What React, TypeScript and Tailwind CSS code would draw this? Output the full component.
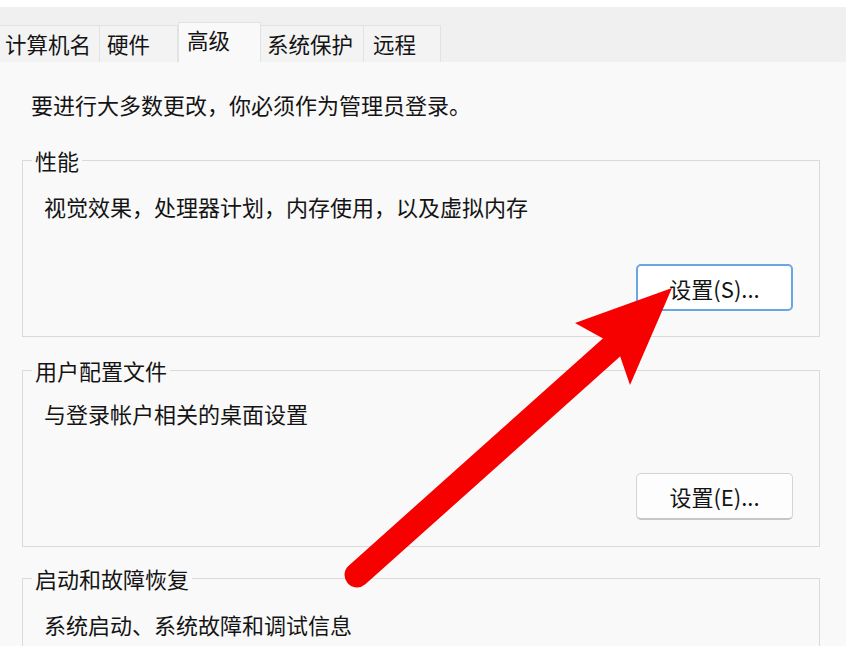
import React from "react";

const font = { fontFamily: '"Noto Sans CJK SC", "Noto Sans", sans-serif' };

function Tab({ label, className }: { label: string; className: string }) {
  return (
    <div className={"flex items-center h-[37px] bg-[#f3f3f3] border-t border-r border-[#e2e2e2] text-[21.5px] leading-[30px] text-[#141414] " + className}>
      {label}
    </div>
  );
}

export default function App() {
  return (
    <div className="relative w-[846px] h-[646px] overflow-hidden bg-[#f9f9f9] text-[#141414]" style={font}>
      <div className="h-[7px] bg-white" />
      <div className="h-[55px] bg-[#f0f0f0] flex items-end">
        <Tab label="计算机名" className="w-[100px] pl-[5px]" />
        <Tab label="硬件" className="w-[78px] pl-[7px]" />
        <div className="h-[40px] w-[83px] bg-[#f9f9f9] border-t border-x border-[#e2e2e2] pl-[8px] pt-[2px] text-[21.5px] leading-[30px]">
          高级
        </div>
        <Tab label="系统保护" className="w-[103px] pl-[6px]" />
        <Tab label="远程" className="w-[77px] pl-[9px]" />
      </div>

      <div className="pt-[27px] pl-[31px] text-[22px] leading-[30px]">
        要进行大多数更改，你必须作为管理员登录。
      </div>

      <fieldset className="mt-[29px] ml-[22px] w-[798px] border border-[#dadada] pb-[25px]">
        <legend className="ml-[9px] px-[3px] text-[22px] leading-[24px]">性能</legend>
        <div className="mt-[19px] ml-[21px] text-[22px] leading-[30px]">视觉效果，处理器计划，内存使用，以及虚拟内存</div>
        <div className="mt-[43px] mr-[26px] flex justify-end">
          <button className="w-[157px] h-[47px] bg-white border-2 border-[#6aa6e3] rounded-[5px] text-[22px] leading-[30px] text-[#141414]">
            设置(S)...
          </button>
        </div>
      </fieldset>

      <fieldset className="mt-[21px] ml-[22px] w-[798px] border border-[#dadada] pb-[26px]">
        <legend className="ml-[9px] px-[3px] text-[22px] leading-[24px]">用户配置文件</legend>
        <div className="mt-[16px] ml-[21px] text-[22px] leading-[30px]">与登录帐户相关的桌面设置</div>
        <div className="mt-[45px] mr-[26px] flex justify-end">
          <button className="w-[157px] h-[47px] bg-[#fdfdfd] border border-[#d4d4d4] border-b-2 border-b-[#c6c6c6] rounded-[5px] text-[22px] leading-[30px] text-[#141414]">
            设置(E)...
          </button>
        </div>
      </fieldset>

      <fieldset className="mt-[19px] ml-[22px] w-[798px] border border-[#dadada] pb-[40px]">
        <legend className="ml-[9px] px-[3px] text-[22px] leading-[24px]">启动和故障恢复</legend>
        <div className="mt-[19px] ml-[21px] text-[22px] leading-[30px]">系统启动、系统故障和调试信息</div>
      </fieldset>

      <svg className="absolute left-0 top-0 pointer-events-none" width="846" height="646" viewBox="0 0 846 646">
        <line x1="357" y1="575" x2="612" y2="347" stroke="#f70000" strokeWidth="25" strokeLinecap="round" />
        <polygon points="672,288 575,323 604,339 620,356 630,385" fill="#f70000" />
      </svg>
    </div>
  );
}
